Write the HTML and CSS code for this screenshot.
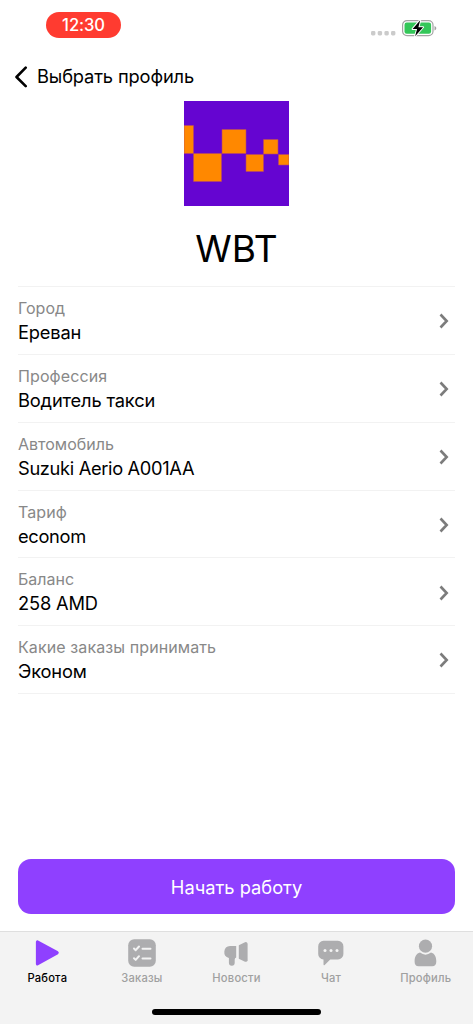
FILE: index.html
```html
<!DOCTYPE html>
<html lang="ru">
<head>
<meta charset="utf-8">
<title>WBT</title>
<link rel="stylesheet" href="styles.css">
</head>
<body>
<div class="app">
  <header class="status">
    <span class="clock">12:30</span>
    <div class="indicators">
      <svg class="signal" width="25" height="5" viewBox="0 0 25 5" fill="#cbcbcb"><rect width="4.4" height="4.4" rx="1.4"/><rect x="6.7" width="4.4" height="4.4" rx="1.4"/><rect x="13.4" width="4.4" height="4.4" rx="1.4"/><rect x="20" width="4.4" height="4.4" rx="1.4"/></svg>
      <svg class="battery" width="36" height="20" viewBox="0 0 36 20"><rect x=".6" y="2.6" width="30.4" height="15" rx="4.4" fill="#fff" stroke="#a3a3a3" stroke-width="1.2"/><rect x="2.5" y="4.5" width="26.6" height="11.2" rx="2.2" fill="#34c759"/><path d="M32.5 8c2.400.8 2.400 3.600 0 4.400z" fill="#a3a3a3"/><path d="M18.200 2.200 10.600 11h4.500l-2 7.200 8-9h-4.700z" fill="#000" stroke="#fff" stroke-width="2" paint-order="stroke" stroke-linejoin="round"/></svg>
    </div>
  </header>
  <nav class="back">
    <svg width="14" height="22" viewBox="0 0 14 22" fill="none" stroke="#000" stroke-width="2.600" stroke-linecap="round" stroke-linejoin="round"><path d="M11.700 1.700 2.500 11l9.200 9.200"/></svg>
    <span class="back-title">Выбрать профиль</span>
  </nav>
  <section class="brand">
    <svg class="logo" width="105" height="105" viewBox="0 0 105 105"><rect width="105" height="105" fill="#6505d1"/><g fill="#ff8800" stroke="#b5476a" stroke-width=".6"><path d="M0 24.500h9.500v28H0zM9.500 52.500h28v28h-28zM38 28.500h24v24H38zM62 53.500h17.500v17H62zM79.500 38.500H94v14.500H79.500zM94.500 53.500H105v10.500H94.500z"/></g></svg>
    <h1 class="brand-name">WBT</h1>
  </section>
  <main class="rows">
    <div class="row"><div><div class="label">Город</div><div class="value">Ереван</div></div><svg class="chev" viewBox="0 0 10 16"><path d="m1.500 1.500 6.200 6.500-6.200 6.500"/></svg></div>
    <div class="row"><div><div class="label wide">Профессия</div><div class="value">Водитель такси</div></div><svg class="chev" viewBox="0 0 10 16"><path d="m1.500 1.500 6.200 6.500-6.200 6.500"/></svg></div>
    <div class="row"><div><div class="label">Автомобиль</div><div class="value latin">Suzuki Aerio A001AA</div></div><svg class="chev" viewBox="0 0 10 16"><path d="m1.500 1.500 6.200 6.500-6.200 6.500"/></svg></div>
    <div class="row"><div><div class="label wide">Тариф</div><div class="value latin">econom</div></div><svg class="chev" viewBox="0 0 10 16"><path d="m1.500 1.500 6.200 6.500-6.200 6.500"/></svg></div>
    <div class="row"><div><div class="label">Баланс</div><div class="value">258 AMD</div></div><svg class="chev" viewBox="0 0 10 16"><path d="m1.500 1.500 6.200 6.500-6.200 6.500"/></svg></div>
    <div class="row"><div><div class="label wide">Какие заказы принимать</div><div class="value">Эконом</div></div><svg class="chev" viewBox="0 0 10 16"><path d="m1.500 1.500 6.200 6.500-6.200 6.500"/></svg></div>
  </main>
  <button class="start">Начать работу</button>
  <footer class="tabbar">
    <div class="tabs">
      <div class="tab active"><svg class="icon" viewBox="0 0 28 28"><path d="M4.600 1.200 25 12.300q1.800 1.500 0 3L4.600 26.500q-1.500.4-1.700-1.500V2.700q.2-1.800 1.700-1.500z"/></svg><span>Работа</span></div>
      <div class="tab"><svg class="icon" viewBox="0 0 28 28"><rect x=".2" y=".2" width="27.600" height="27.600" rx="6"/><path class="cut" d="m6 9.500 1.700 1.700L11 7.500M14.500 9.700h8M6 19.200l1.700 1.700 3.300-3.700M14.500 19.500h8"/></svg><span>Заказы</span></div>
      <div class="tab"><svg class="icon" viewBox="0 0 28 28"><path d="M8 7h6.200v11.500q-1.500.3-1.500 2v3.300a2.900 2.900 0 0 1-5.800 0V19A6.100 6.100 0 0 1 8 7z"/><path d="m16.800 6.200 6.200-3q2.200-.6 2.600 1.500v16.500q-.4 2.200-2.600 1.500l-6.200-3z"/></svg><span>Новости</span></div>
      <div class="tab"><svg class="icon" viewBox="0 0 28 28"><path d="M6.500 1.700h14.400a5.500 5.500 0 0 1 5.500 5.700v7.500a5.500 5.500 0 0 1-5.500 5.600H13.200L7.700 26q-1.200.8-1.200-.7v-4.800a5.600 5.600 0 0 1-5.300-5.600V7.400a5.700 5.700 0 0 1 5.300-5.700z"/><g fill="#f3f3f3"><circle cx="8" cy="11.500" r="1.500"/><circle cx="14" cy="11.500" r="1.500"/><circle cx="20" cy="11.500" r="1.500"/></g></svg><span>Чат</span></div>
      <div class="tab"><svg class="icon" viewBox="0 0 28 28"><circle cx="13.500" cy="7.200" r="6.600"/><path d="M8 13.500q5.500 4.300 11 0c3.500.8 5.300 4 5.300 9 0 3-1.300 4.700-4.200 4.700H6.700c-2.900 0-4.100-1.700-4.100-4.700 0-5 1.900-8.200 5.400-9z"/></svg><span>Профиль</span></div>
    </div>
    <div class="home"></div>
  </footer>
</div>
</body>
</html>
```
FILE: styles.css
```css
* { box-sizing: border-box; }
body { margin: 0; background: #fff; color: #000; font-family: Inter, "Liberation Sans", sans-serif; }
.app { width: 473px; height: 1024px; display: flex; flex-direction: column; overflow: hidden; }
.status { height: 62px; padding: 12px 35px 0 46px; display: flex; justify-content: space-between; align-items: flex-start; flex: none; }
.clock { width: 75px; height: 26px; border-radius: 13px; background: #ff3b30; color: #fff; font-size: 16.6px; font-weight: 500; letter-spacing: -.1px; line-height: 26px; text-align: center; }
.indicators { display: flex; align-items: flex-start; gap: 6px; padding-top: 6px; }
.signal { margin-top: 13px; }
.back { height: 30px; padding: 0 14px; display: flex; align-items: center; gap: 9px; flex: none; }
.back-title { font-size: 18.3px; letter-spacing: -.14px; white-space: nowrap; padding-bottom: 2px; }
.brand { height: 194px; padding-top: 9px; display: flex; flex-direction: column; align-items: center; flex: none; }
.brand-name { margin: 19px 0 0; font-size: 37px; font-weight: 400; line-height: 48px; letter-spacing: 0; }
.rows { margin: 0 18px; border-top: 1px solid #f2f2f2; flex: none; }
.row { height: 67.85px; padding: 10px 6px 0 0; border-bottom: 1px solid #f2f2f2; display: flex; justify-content: space-between; }
.label { font-size: 16px; line-height: 23px; color: #888; white-space: nowrap; }
.wide { letter-spacing: .1px; }
.value { font-size: 18.3px; line-height: 24px; letter-spacing: -.17px; white-space: nowrap; }
.latin { letter-spacing: -.34px; }
.chev { width: 10px; height: 16px; margin-top: 16.2px; fill: none; stroke: #7c7c7c; stroke-width: 2.6; }
.start { margin: auto 18px 17px; height: 55px; flex: none; padding: 2px 0 0; border: 0; border-radius: 13px; background: #8f40ff; color: #fff; font: 400 18.3px/53px Inter, sans-serif; letter-spacing: 0; }
.tabbar { height: 93px; flex: none; border-top: 1px solid #dfdfdf; background: #f3f3f3; display: flex; flex-direction: column; align-items: center; justify-content: space-between; padding: 7px 0 9px; }
.tabs { width: 100%; display: grid; grid-template-columns: repeat(5, 1fr); }
.tab { display: flex; flex-direction: column; align-items: center; gap: 3px; color: #a0a0a0; font-size: 11.2px; font-weight: 500; line-height: 16px; letter-spacing: .2px; }
.icon { width: 28px; height: 28px; fill: #adadaf; }
.cut { fill: none; stroke: #f3f3f3; stroke-width: 2; stroke-linecap: round; stroke-linejoin: round; }
.active { color: #000; }
.active .icon { fill: #8f40ff; }
.home { width: 169px; height: 6px; border-radius: 3px; background: #000; }
```
